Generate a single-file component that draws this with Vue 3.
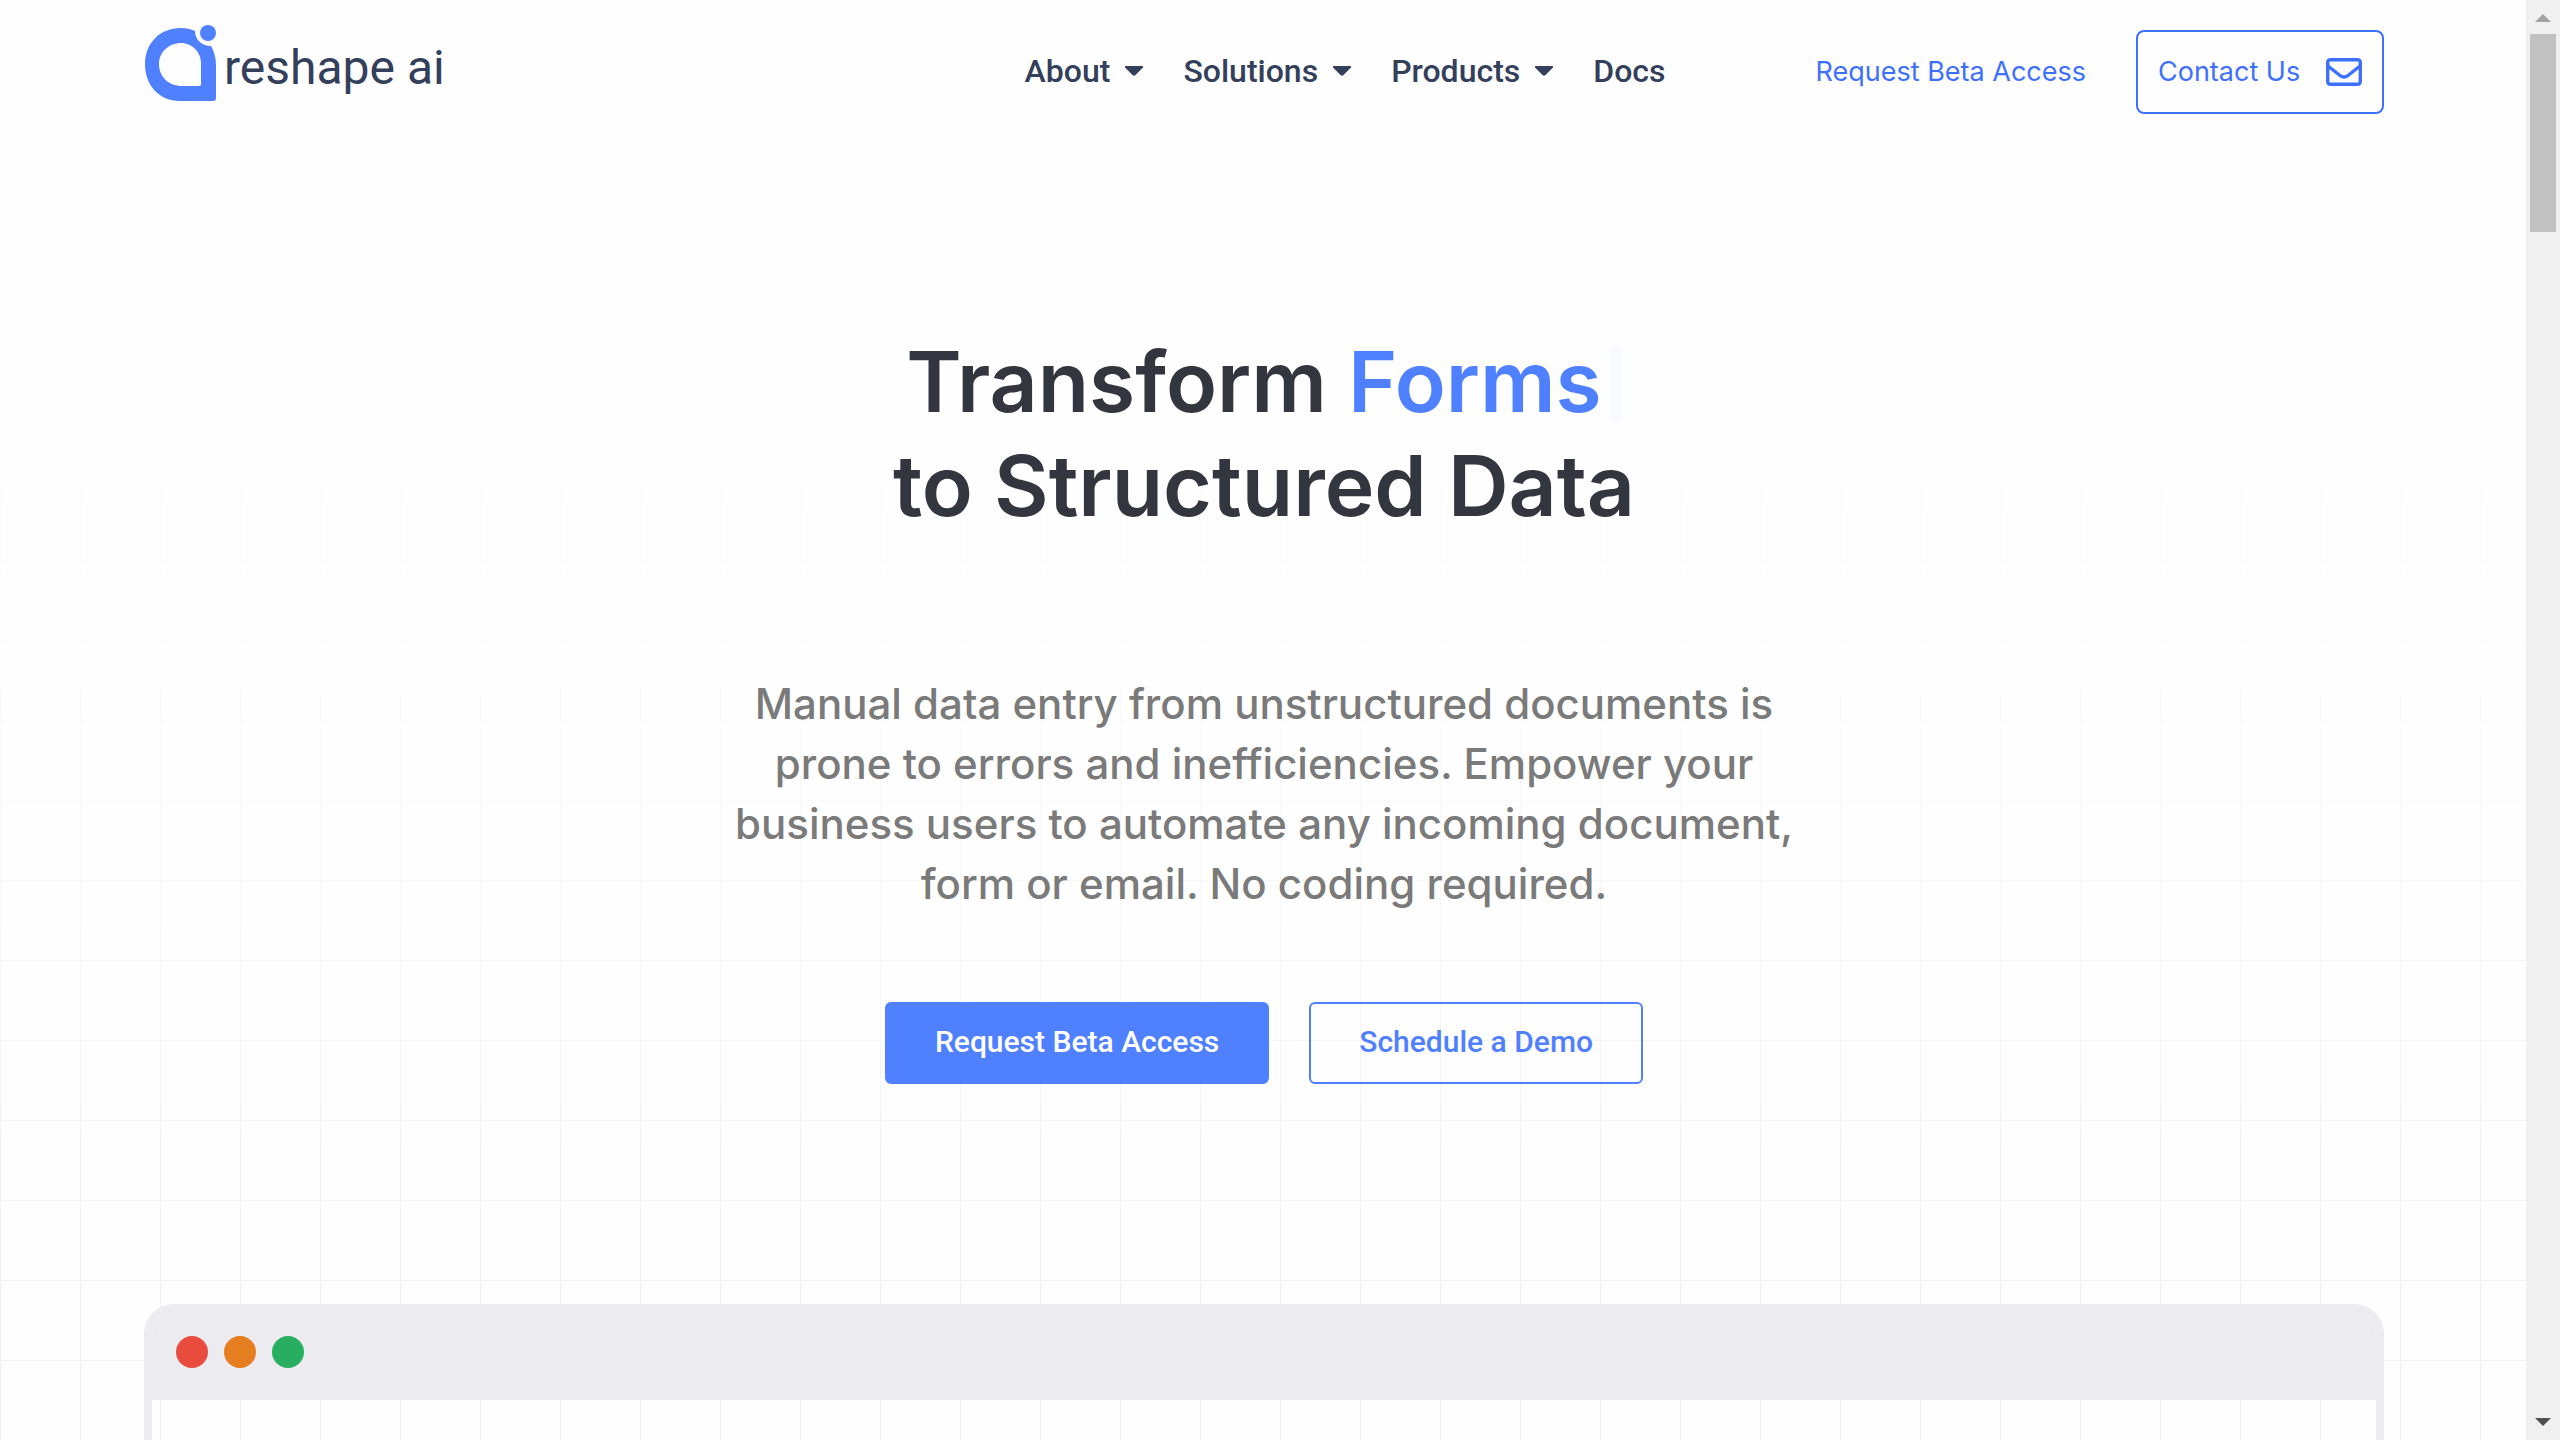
<script setup>
const menu = [
  { label: 'About', sub: true },
  { label: 'Solutions', sub: true },
  { label: 'Products', sub: true },
  { label: 'Docs', sub: false },
]
</script>

<template>
  <div class="page">
    <div class="content">
      <header class="header">
        <a class="logo" href="#" aria-label="reshape ai">
          <svg width="74" height="78" viewBox="-1 0 74 78" aria-hidden="true">
            <path fill="#4f80ff" fill-rule="evenodd" d="M36 3C41 3 46 4 50 6C50 14 56 21 66 21C69 26 71 33 71 40V73Q71 76 68 76H35C14 76 0 60 0 39C0 18 15 3 36 3ZM36 18C24 18 14 27 14 39C14 52 24 61 37 61H54Q56 61 56 59V38C56 27 47 18 36 18Z" />
            <circle cx="63" cy="8" r="8" fill="#4f80ff" />
          </svg>
          <span class="logo-text">reshape ai</span>
        </a>
        <nav class="menu">
          <a v-for="item in menu" :key="item.label" href="#" class="menu-item">
            {{ item.label }}
            <svg v-if="item.sub" width="18" height="10" viewBox="0 0 18 10" aria-hidden="true">
              <path fill="#333f5b" d="M1 0H17Q19 0 17.500 2L10.500 9Q9 10.500 7.500 9L.5 2Q-1 0 1 0Z" />
            </svg>
          </a>
        </nav>
        <div class="actions">
          <a href="#" class="beta">Request Beta Access</a>
          <a href="#" class="contact">
            Contact Us
            <svg width="36" height="28" viewBox="0 0 36 28" fill="none" stroke="#3d70ff" stroke-width="3.400" aria-hidden="true">
              <rect x="1.700" y="1.700" width="32.600" height="24.600" rx="2.500" />
              <path d="M2 8L14 17.500Q18 20.500 22 17.500L34 8" />
            </svg>
          </a>
        </div>
      </header>

      <main class="hero">
        <h1>
          Transform <span class="typed">Forms</span><span class="cursor"></span><br />
          to Structured Data
        </h1>
        <p>
          Manual data entry from unstructured documents is<br />
          prone to errors and inefficiencies. Empower your<br />
          business users to automate any incoming document,<br />
          form or email. No coding required.
        </p>
        <div class="buttons">
          <button type="button" class="btn primary">Request Beta Access</button>
          <button type="button" class="btn">Schedule a Demo</button>
        </div>
      </main>

      <section class="browser">
        <div class="browser-bar">
          <i class="dot red"></i>
          <i class="dot orange"></i>
          <i class="dot green"></i>
        </div>
      </section>
    </div>

    <div class="scrollbar">
      <svg width="16" height="8" viewBox="0 0 16 8" aria-hidden="true"><path fill="#a3a3a3" d="M8 0L16 8H0Z" /></svg>
      <div class="thumb"></div>
      <svg width="16" height="8" viewBox="0 0 16 8" aria-hidden="true"><path fill="#505050" d="M0 0H16L8 8Z" /></svg>
    </div>
  </div>
</template>

<style>
body {
  margin: 0;
}
</style>

<style scoped>
.page {
  display: grid;
  grid-template-columns: 1fr 34px;
  height: 100vh;
  overflow: hidden;
  font-family: Inter, "Liberation Sans", sans-serif;
}
a {
  text-decoration: none;
}
.content {
  display: flex;
  flex-direction: column;
  min-height: 0;
  padding: 0 142px 0 144px;
  background:
    linear-gradient(#fefefe 400px, rgba(254, 254, 254, 0) 1240px),
    linear-gradient(#f2f2f3 1px, transparent 1px) 0 0 / 80px 80px,
    linear-gradient(90deg, #f2f2f3 1px, #fefefe 1px) 0 0 / 80px 80px;
}
.header {
  display: grid;
  grid-template-columns: 1fr auto auto;
  column-gap: 150px;
  align-items: center;
  height: 144px;
  flex: none;
}
.logo {
  display: flex;
  align-items: flex-start;
  gap: 6px;
  height: 94px;
}
.logo-text {
  font: 400 48px/58px Roboto, sans-serif;
  color: #333f5b;
  margin-top: 14px;
}
.menu {
  display: flex;
  gap: 40px;
  padding-bottom: 2px;
}
.menu-item {
  display: flex;
  align-items: center;
  gap: 15px;
  font: 500 32px/40px Roboto, sans-serif;
  color: #333f5b;
}
.actions {
  display: flex;
  justify-content: flex-end;
  align-items: center;
  gap: 50px;
  font-size: 27px;
  line-height: 40px;
}
.beta,
.contact {
  color: #3d70ff;
}
.contact {
  display: flex;
  align-items: center;
  justify-content: space-between;
  box-sizing: border-box;
  width: 248px;
  height: 84px;
  padding: 0 20px;
  border: 2px solid #3d70ff;
  border-radius: 8px;
}
.hero {
  display: flex;
  flex-direction: column;
  align-items: center;
  text-align: center;
}
h1 {
  margin: 186px 0 0;
  font-size: 84px;
  line-height: 104px;
  font-weight: 600;
  color: #34363f;
}
.typed {
  color: #4f80ff;
}
.cursor {
  display: inline-block;
  width: 12px;
  height: 76px;
  margin-left: 8px;
  vertical-align: -10px;
  background: #f8faff;
}
p {
  margin: 136px 0 0;
  font-size: 42px;
  line-height: 60px;
  font-weight: 500;
  color: #7a7a7a;
}
.buttons {
  display: flex;
  gap: 40px;
  margin-top: 88px;
}
.btn {
  height: 82px;
  padding: 0 48px 2px;
  border: 2px solid #4f80ff;
  border-radius: 6px;
  background: transparent;
  color: #4f80ff;
  font: 500 30px/36px Roboto, sans-serif;
}
.primary {
  background: #4f80ff;
  color: #fff;
}
.browser {
  flex: 1;
  margin-top: 220px;
  border: 8px solid #ecebf0;
  border-width: 0 8px;
  border-radius: 30px 30px 0 0;
  overflow: hidden;
}
.browser-bar {
  display: flex;
  gap: 16px;
  height: 96px;
  box-sizing: border-box;
  padding: 32px 24px;
  background: #ecebf0;
}
.dot {
  width: 32px;
  height: 32px;
  border-radius: 50%;
}
.red {
  background: #e84c3d;
}
.orange {
  background: #e67e22;
}
.green {
  background: #27ae60;
}
.scrollbar {
  display: flex;
  flex-direction: column;
  align-items: center;
  box-sizing: border-box;
  padding: 14px 0;
  background: #f0f0f0;
}
.thumb {
  width: 26px;
  height: 198px;
  margin: 12px 0 auto;
  background: #c1c1c1;
}
</style>
